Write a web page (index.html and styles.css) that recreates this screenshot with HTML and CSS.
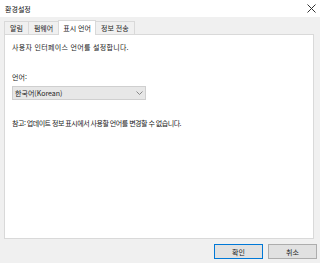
FILE: index.html
```html
<!DOCTYPE html>
<html lang="ko">
<head>
<meta charset="UTF-8">
<title>환경설정</title>
<link rel="stylesheet" href="styles.css">
</head>
<body>
  <div class="window">
    <div class="titlebar">
      <span class="title">환경설정</span>
      <svg class="close" width="9" height="9" viewBox="0 0 9 9"><path d="M0.5 0.5 L8.5 8.5 M8.5 0.5 L0.5 8.5" stroke="#333" stroke-width="1"/></svg>
    </div>
    <div class="content">
      <div class="tabs">
        <div class="tab">알림</div>
        <div class="tab">펌웨어</div>
        <div class="tab active">표시 언어</div>
        <div class="tab">정보 전송</div>
      </div>
      <div class="panel">
        <p class="desc">사용자 인터페이스 언어를 설정합니다.</p>
        <label class="label">언어:</label>
        <div class="select">
          <span>한국어(Korean)</span>
          <svg width="7" height="4" viewBox="0 0 7 4"><path d="M0.5 0.5 L3.5 3.5 L6.5 0.5" fill="none" stroke="#888" stroke-width="1"/></svg>
        </div>
        <p class="note">참고: 업데이트 정보 표시에서 사용할 언어를 변경할 수 없습니다.</p>
      </div>
      <div class="buttons">
        <button class="btn primary">확인</button>
        <button class="btn">취소</button>
      </div>
    </div>
  </div>
</body>
</html>
```

FILE: styles.css
```css
body {
  margin: 0;
  font-family: "Noto Sans CJK KR", "Noto Sans", sans-serif;
  font-size: 7px;
  color: #222222;
}

.window {
  width: 320px;
  height: 263px;
  display: flex;
  flex-direction: column;
  background-color: #f0f0f0; /* dialog gray */
}

.titlebar {
  height: 17px;
  background-color: #ffffff;
  display: flex;
  align-items: center;
  justify-content: space-between;
  padding: 0 4px 0 5px;
}

.title {
  font-size: 7px;
  color: #111111;
}

.content {
  flex: 1;
  padding: 3px 6px 0 4px;
  display: flex;
  flex-direction: column;
}

.tabs {
  display: flex;
  align-items: flex-end;
  height: 14px;
}

.tab {
  height: 12px;
  line-height: 12px;
  padding: 0 5px;
  border: 1px solid #d9d9d9;
  border-bottom: none;
  background-color: #f0f0f0;
  margin-right: -1px;
}

.tab.active {
  height: 14px;
  line-height: 14px;
  background-color: #ffffff;
  position: relative;
  z-index: 1;
  margin-bottom: -1px;
  padding: 0 4px;
}

.panel {
  height: 203px;
  background-color: #ffffff;
  border: 1px solid #d9d9d9;
  padding: 0 7px;
}

.desc {
  margin: 6px 0 0;
  line-height: 12px;
  letter-spacing: 0.3px;
}

.label {
  display: block;
  margin-top: 18px;
  line-height: 12px;
}

.select {
  box-sizing: border-box;
  width: 134px;
  height: 14px;
  margin-top: 3px;
  border: 1px solid #cfcfcf;
  background-color: #e7e7e7;
  display: flex;
  align-items: center;
  justify-content: space-between;
  padding: 0 2px 0 2px;
}

.note {
  margin: 17px 0 0;
  line-height: 12px;
  letter-spacing: -0.5px; /* tighter to fit the original line length */
}

.buttons {
  display: flex;
  justify-content: flex-end;
  gap: 5px;
  margin-top: 5px;
  margin-right: -3px;
}

.btn {
  width: 49px;
  height: 15px;
  padding: 0;
  font-family: inherit;
  font-size: 7px;
  color: #222222;
  background-color: #e1e1e1;
  border: 1px solid #adadad;
}

.btn.primary {
  border: 1px solid #0078d7; /* focus blue */
}
```
